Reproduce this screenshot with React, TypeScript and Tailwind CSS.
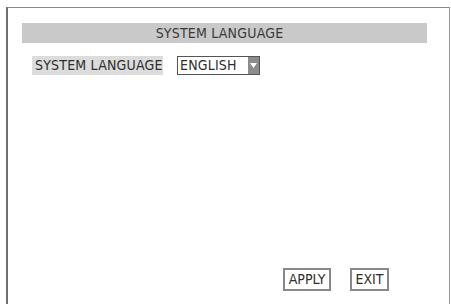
export default function App() {
  return (
    <div className="w-[451px] h-[304px] bg-white overflow-hidden pt-[7px] pl-[6px]" style={{ fontFamily: '"DejaVu Sans Condensed", "DejaVu Sans", sans-serif' }}>
      <div className="w-[444px] h-[310px] border-l-2 border-t border-r border-l-[#6e6e6e] border-t-[#8a8a8a] border-r-[#9a9a9a] pl-[14px] pt-[15px]">
        <div className="w-[405px] h-[20px] bg-[#c9c9c9] flex items-center justify-center text-[14px] text-[#3a3a3a] tracking-[0.2px] pr-[10px]">
          SYSTEM LANGUAGE
        </div>

        <div className="flex items-center mt-[13px] ml-[10px]">
          <div className="w-[131px] h-[19px] pl-[3px] bg-[#dcdcdc] flex items-center text-[14px] text-[#2e2e2e] tracking-[0.2px] whitespace-nowrap">
            SYSTEM LANGUAGE
          </div>
          <div className="ml-[14px] w-[83px] h-[19px] border border-[#555] flex items-stretch">
            <span className="flex-1 flex items-center pl-[2px] text-[14px] text-[#2e2e2e] tracking-[0.2px]">ENGLISH</span>
            <span className="w-[11px] bg-[#8c8c8c] flex items-center justify-center">
              <svg width="7" height="5" viewBox="0 0 7 5">
                <path d="M0 0 H7 L3.5 5 Z" fill="#ffffff" />
              </svg>
            </span>
          </div>
        </div>

        <div className="flex justify-end gap-[19px] mt-[193px] pr-[60px]">
          <button className="w-[48px] h-[23px] border-2 border-[#888] flex items-center justify-center text-[14px] text-[#2e2e2e]">
            APPLY
          </button>
          <button className="w-[39px] h-[23px] border-2 border-[#888] flex items-center justify-center text-[14px] text-[#2e2e2e]">
            EXIT
          </button>
        </div>
      </div>
    </div>
  );
}
